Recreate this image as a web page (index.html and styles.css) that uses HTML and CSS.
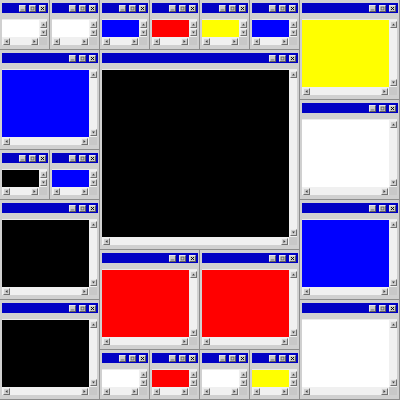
FILE: index.html
```html
<!DOCTYPE html>
<html lang="en">

<head>
    <meta charset="UTF-8">
    <meta name="viewport" content="width=device-width, initial-scale=1.0">
    <title>Windows</title>
    <link rel="stylesheet" href="styles.css">
</head>

<body>
    <div class="desk"></div>
    <script>
        // col, row, width, height (in 50px cells), colour
        const wins = [
            [1, 1, 1, 1, 'white'], [2, 1, 1, 1, 'white'], [3, 1, 1, 1, 'blue'],
            [4, 1, 1, 1, 'red'], [5, 1, 1, 1, 'yellow'], [6, 1, 1, 1, 'blue'],
            [7, 1, 2, 2, 'yellow'], [1, 2, 2, 2, 'blue'], [3, 2, 4, 4, 'black'],
            [1, 4, 1, 1, 'black'], [2, 4, 1, 1, 'blue'], [7, 3, 2, 2, 'white'],
            [1, 5, 2, 2, 'black'], [7, 5, 2, 2, 'blue'], [3, 6, 2, 2, 'red'],
            [5, 6, 2, 2, 'red'], [1, 7, 2, 2, 'black'], [7, 7, 2, 2, 'white'],
            [3, 8, 1, 1, 'white'], [4, 8, 1, 1, 'red'], [5, 8, 1, 1, 'white'],
            [6, 8, 1, 1, 'yellow']
        ]

        const tri = {
            up: 'M1.5 5h4L3.5 2z',
            down: 'M1.5 2h4L3.5 5z',
            left: 'M5 1.5v4L2 3.5z',
            right: 'M2 1.5v4L5 3.5z'
        }

        function arrow(dir) {
            return `<span class="arr ${dir}"><svg viewBox="0 0 7 7"><path d="${tri[dir]}"/></svg></span>`
        }

        const buttons = `
            <span class="btn"><svg viewBox="0 0 7 7"><path d="M1 5.5h5" /></svg></span>
            <span class="btn"><svg viewBox="0 0 7 7"><rect x="1.5" y="1.5" width="4" height="4" /></svg></span>
            <span class="btn close"><svg viewBox="0 0 7 7"><path d="M1.5 1.5l4 4M5.5 1.5l-4 4" /></svg></span>`

        const desk = document.querySelector('.desk')
        wins.forEach(w => {
            const win = document.createElement('div')
            win.className = 'win'
            win.style.gridArea = `${w[1]} / ${w[0]} / span ${w[3]} / span ${w[2]}`
            win.innerHTML = `
                <div class="title">${buttons}</div>
                <div class="body">
                    <div class="view ${w[4]}"></div>
                    <div class="vbar">${arrow('up')}${arrow('down')}</div>
                    <div class="hbar">${arrow('left')}${arrow('right')}</div>
                    <div class="corner"></div>
                </div>`
            desk.appendChild(win)
        })
    </script>
</body>

</html>
```

FILE: styles.css
```css
body {
    margin: 0;
    background: #c4c4c4;
}

.desk {
    display: grid;
    grid-template-columns: repeat(8, 50px);
    grid-template-rows: repeat(8, 50px);
    width: 400px;
    height: 400px;
}

.win {
    display: flex;
    flex-direction: column;
    box-sizing: border-box;
    padding: 3px 1px 4px 2px;
    background: #d0d0d0;
    border-right: 1px solid #8c8c8c;
    border-bottom: 1px solid #8c8c8c;
}

.title {
    display: flex;
    justify-content: flex-end;
    align-items: center;
    gap: 3px;
    height: 10px;
    padding-right: 2px;
    background: #0000c4;
}

.btn {
    display: flex;
    width: 7px;
    height: 7px;
    box-sizing: border-box;
    background: #c8c8c8;
    border: 1px solid #e8e8e8;
    border-right-color: #606060;
    border-bottom-color: #606060;
}

.btn svg {
    width: 100%;
    height: 100%;
    fill: none;
    stroke: #505050;
    stroke-width: 1;
}

.btn.close svg {
    stroke: #000000;
    stroke-width: 1.4;
}

.body {
    flex: 1;
    display: grid;
    grid-template-columns: 1fr 8px;
    grid-template-rows: 1fr 8px;
    margin-top: 6px;
    margin-right: 1px;
    min-height: 0;
    border-top: 1px solid #ececec;
}

.view {
    background: #ffffff;
}

.white { background: #ffffff; }
.blue { background: #0000ff; }
.red { background: #ff0000; }
.yellow { background: #ffff00; }
.black { background: #000000; }

.vbar {
    display: flex;
    flex-direction: column;
    justify-content: space-between;
    align-items: center;
    padding: 1px 0;
    background: #f0f0f0;
}

.hbar {
    display: flex;
    justify-content: space-between;
    align-items: center;
    padding: 0 1px;
    background: #f0f0f0;
}

.corner {
    background: #c8c8c8;
}

.arr {
    display: flex;
    width: 7px;
    height: 7px;
    box-sizing: border-box;
    background: #d0d0d0;
    border: 1px solid #ececec;
    border-right-color: #707070;
    border-bottom-color: #707070;
}

.arr svg {
    width: 100%;
    height: 100%;
    fill: #404040;
}
```
